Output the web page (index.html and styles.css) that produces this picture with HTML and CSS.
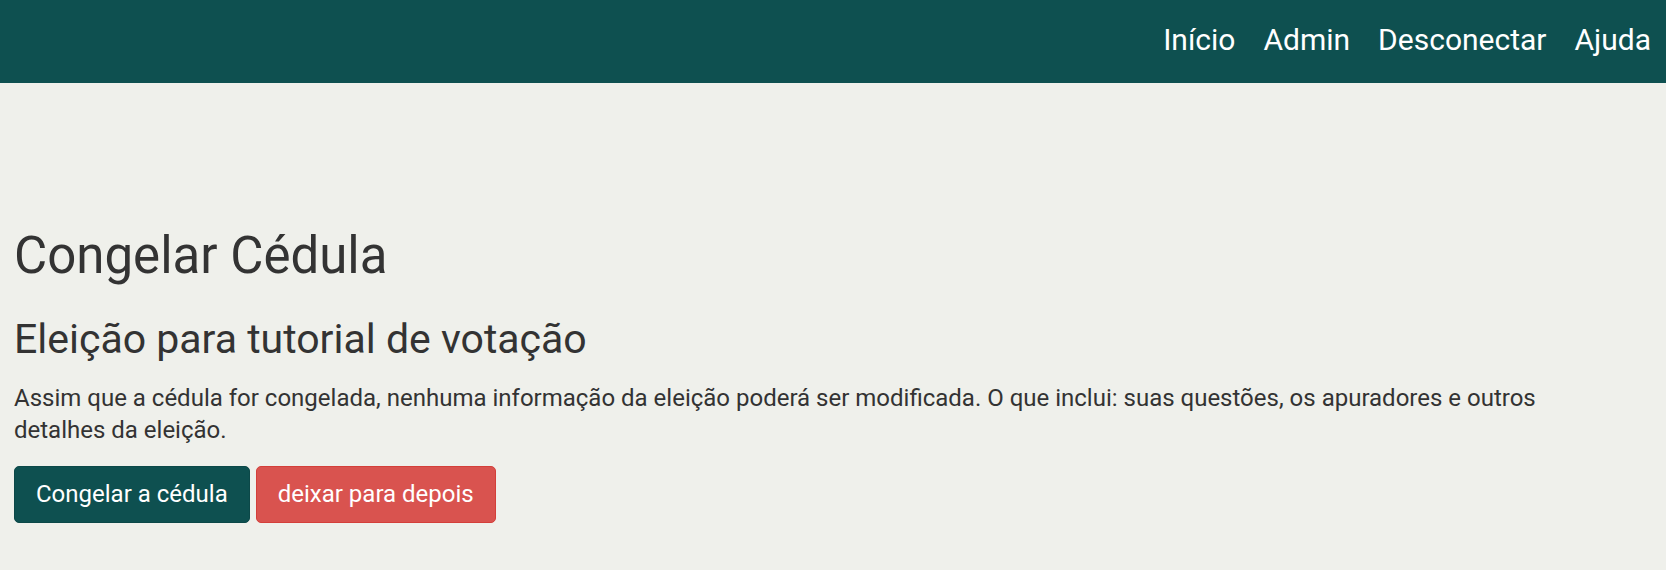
FILE: index.html
```html
<!DOCTYPE html>
<html lang="pt">
<head>
<meta charset="utf-8">
<title>Congelar Cédula</title>
<link rel="stylesheet" href="styles.css">
</head>
<body>
<header class="topbar">
  <nav class="nav">
    <a href="#" class="nav-link">Início</a>
    <a href="#" class="nav-link">Admin</a>
    <a href="#" class="nav-link">Desconectar</a>
    <a href="#" class="nav-link">Ajuda</a>
  </nav>
</header>
<main class="content">
  <h1 class="title">Congelar Cédula</h1>
  <h2 class="subtitle">Eleição para tutorial de votação</h2>
  <p class="text">Assim que a cédula for congelada, nenhuma informação da eleição poderá ser modificada. O que inclui: suas questões, os apuradores e outros detalhes da eleição.</p>
  <div class="actions">
    <button class="btn btn-primary">Congelar a cédula</button>
    <button class="btn btn-danger">deixar para depois</button>
  </div>
</main>
</body>
</html>
```

FILE: styles.css
```css
* { box-sizing: border-box; }
html, body {
  margin: 0;
  padding: 0;
  background: #eff0eb;
  font-family: Roboto, "Liberation Sans", sans-serif;
  color: #333;
}
.topbar {
  background: #0e5050;
  height: 83px;
  display: flex;
  justify-content: flex-end;
  align-items: center;
  padding: 0 15px 3px 0;
}
.nav {
  display: flex;
  gap: 28px;
}
.nav-link {
  color: #fff;
  text-decoration: none;
  font-size: 30px;
  line-height: 1;
}
.content {
  padding: 142px 14px 0 14px;
}
.title {
  font-size: 51px;
  font-weight: 400;
  line-height: 1.2;
  margin: 0 0 29px 0;
}
.subtitle {
  font-size: 41px;
  font-weight: 400;
  line-height: 1.2;
  margin: 0 0 18px 0;
}
.text {
  font-size: 24px;
  line-height: 32px;
  max-width: 1545px;
  margin: 0 0 20px 0;
}
.actions {
  display: flex;
  gap: 6px;
}
.btn {
  font-family: Roboto, "Liberation Sans", sans-serif;
  font-size: 24px;
  line-height: 33px;
  padding: 11px 21px;
  border-radius: 5px;
  color: #fff;
  border: 1px solid transparent;
}
.btn-primary {
  background: #0e5050;
  border-color: #0c4848;
}
.btn-danger {
  background: #d9534f;
  border-color: #d43f3a;
}
```
